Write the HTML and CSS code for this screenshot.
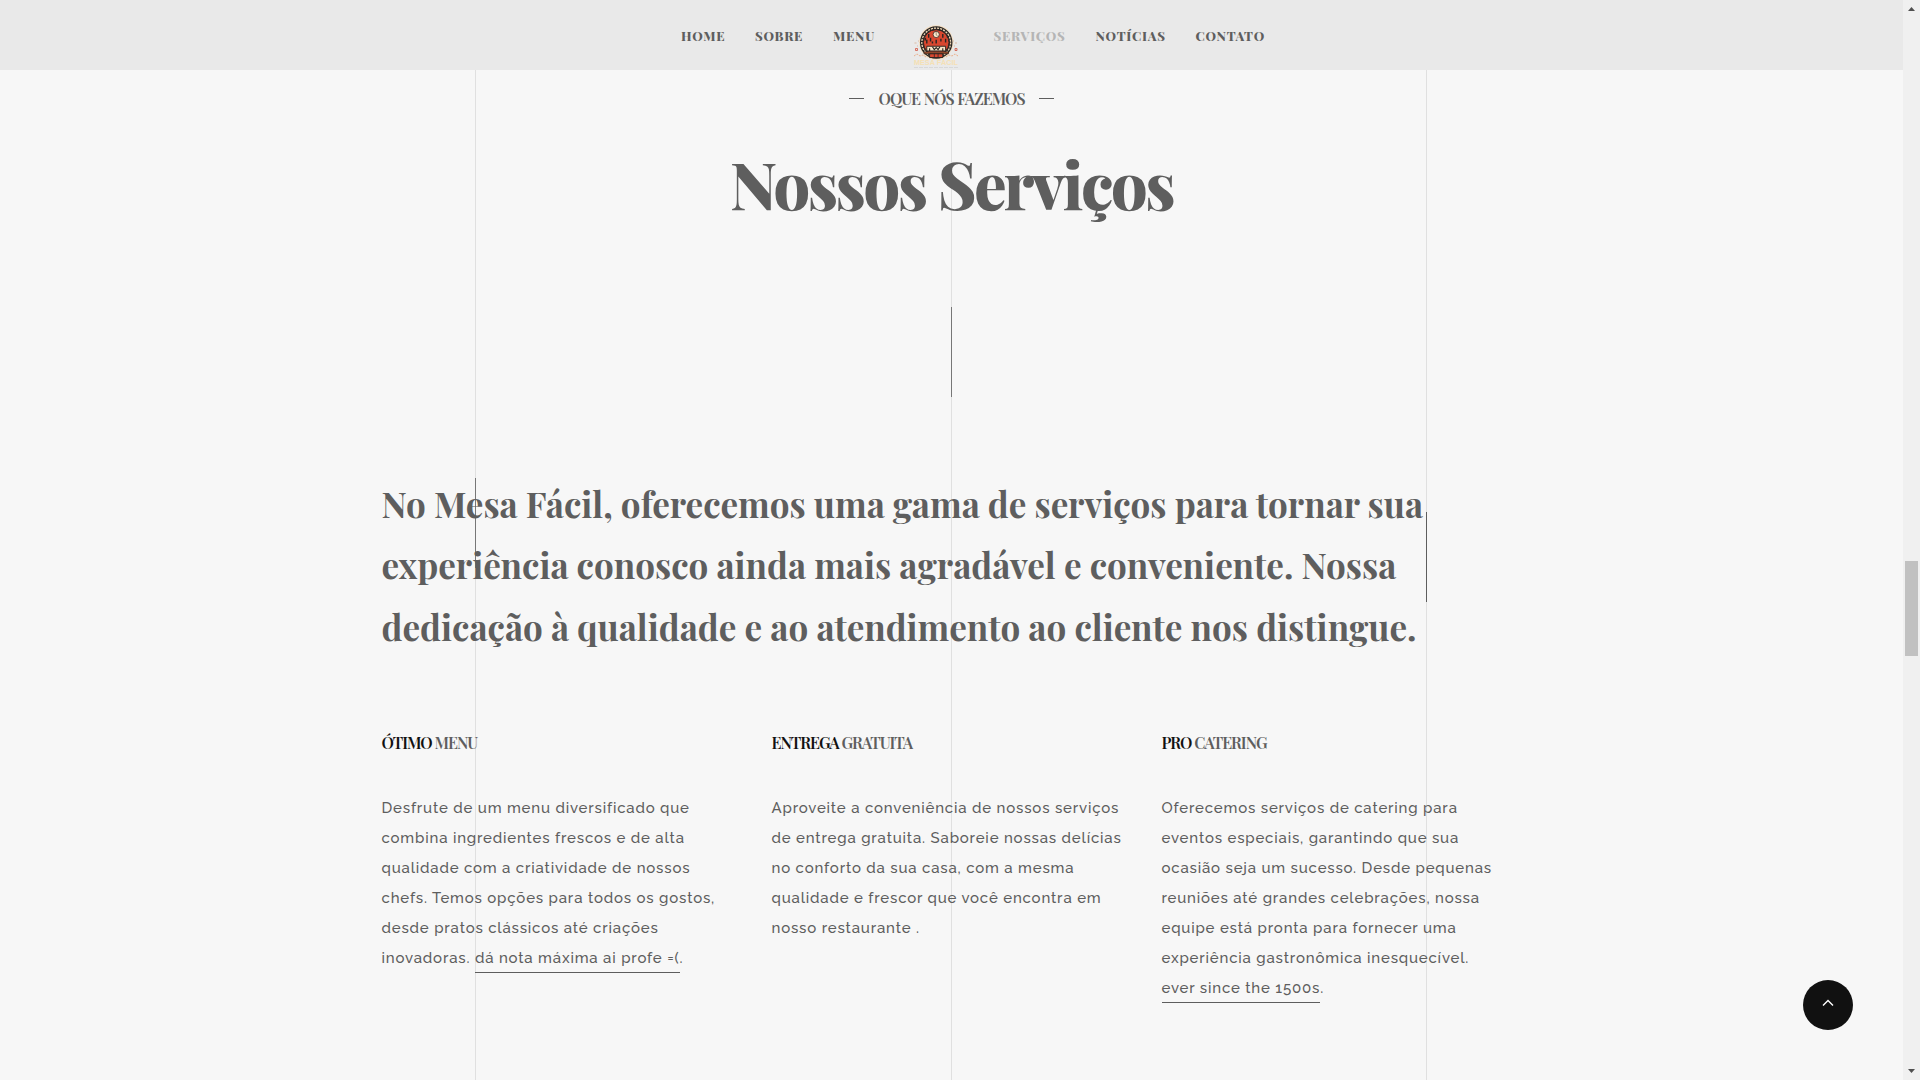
FILE: index.html
```html
<!DOCTYPE html>
<html lang="pt-BR">
<head>
<meta charset="utf-8">
<title>Mesa Fácil</title>
<link rel="stylesheet" href="styles.css">
</head>
<body>
<div class="window">
  <div class="page">
    <div class="guides"><i class="guide"></i><i class="guide"></i><i class="guide"></i></div>
    <header class="header">
      <nav class="nav">
        <a style="width:44px">HOME</a>
        <a style="width:48px">SOBRE</a>
        <a style="width:42px">MENU</a>
        <svg class="logo" viewBox="0 0 48 46" width="48" height="46">
          <g transform="translate(24.200 18.500) scale(.94) translate(-24 -19)">
            <circle cx="24" cy="19" r="18.300" fill="#f6dfc2"/>
            <circle cx="24" cy="19" r="17.300" fill="#292624"/>
            <circle cx="24" cy="19" r="15.300" fill="none" stroke="#f0d6b4" stroke-width="1.400" stroke-dasharray="2.200 1.100"/>
            <circle cx="24" cy="19" r="13.600" fill="#d9472f" stroke="#292624" stroke-width="1"/>
            <circle cx="24" cy="10.500" r="3.300" fill="#fbe9cd" stroke="#292624" stroke-width=".8"/>
            <path d="M24 8v3l1.500 1" fill="none" stroke="#7d6550" stroke-width=".7"/>
            <path d="M16 10v4M14 16v4M18 14v4M31 10v4M34 15v4M29 15v3M20 18v2M24 16v4M12.500 14v3M36 12v2" stroke="#292624" stroke-width="1.500"/>
            <path d="M14 23h20v5H14z" fill="#f8e4c6" stroke="#292624"/>
            <path d="M17 25v3M20 23.500l2 3 2-2 2 2 2-3M31 25v3" stroke="#292624" stroke-width="1.200" fill="none"/>
            <path d="M11 29h26v2H11z" fill="#b8552f" stroke="#292624" stroke-width=".8"/>
            <path d="M17 31h14v4H17z" fill="#d9472f" stroke="#292624"/>
            <path d="M22 31v4M26 31v4" stroke="#292624" stroke-width=".8"/>
          </g>
          <path d="M3.500 24.500h2v2h-2zM43 24.500h2v2h-2z" fill="#f3d9d0" stroke="#cf5746" stroke-width=".8"/>
          <path d="M2.500 19h2M43 19h2M6 17h1M41 17h1M5 22h1M42 22h1" stroke="#dbb9a1"/>
          <path d="M2 32l3-2 3 2 3-1 3 2M46 32l-3-2-3 2-3-1-3 2" stroke="#e9b18e" fill="none" stroke-dasharray="2 1"/>
          <text x="2" y="41" textLength="44" lengthAdjust="spacingAndGlyphs" class="logo-name">MESA FÁCIL</text>
          <path d="M2 43.500h44" stroke="#d8d8d8" stroke-dasharray="4 1"/>
        </svg>
        <a class="active" style="width:72px">SERVIÇOS</a>
        <a style="width:70px">NOTÍCIAS</a>
        <a style="width:69px">CONTATO</a>
      </nav>
    </header>
    <main class="services">
      <p class="eyebrow"><span>OQUE NÓS FAZEMOS</span></p>
      <h1>Nossos Serviços</h1>
      <div class="content">
        <h2>No Mesa Fácil, oferecemos uma gama de serviços para tornar sua<br>experiência conosco ainda mais agradável e conveniente. Nossa<br>dedicação à qualidade e ao atendimento ao cliente nos distingue.</h2>
        <div class="columns">
          <section>
            <h3><b>ÓTIMO</b> MENU</h3>
            <p>Desfrute de um menu diversificado que<br>combina ingredientes frescos e de alta<br>qualidade com a criatividade de nossos<br>chefs. Temos opções para todos os gostos,<br>desde pratos clássicos até criações<br>inovadoras. <a>dá nota máxima ai profe =(</a>.</p>
          </section>
          <section>
            <h3><b>ENTREGA</b> GRATUITA</h3>
            <p>Aproveite a conveniência de nossos serviços<br>de entrega gratuita. Saboreie nossas delícias<br>no conforto da sua casa, com a mesma<br>qualidade e frescor que você encontra em<br>nosso restaurante .</p>
          </section>
          <section>
            <h3><b>PRO</b> CATERING</h3>
            <p>Oferecemos serviços de catering para<br>eventos especiais, garantindo que sua<br>ocasião seja um sucesso. Desde pequenas<br>reuniões até grandes celebrações, nossa<br>equipe está pronta para fornecer uma<br>experiência gastronômica inesquecível.<br><a>ever since the 1500s</a>.</p>
          </section>
        </div>
      </div>
    </main>
    <a class="to-top"><svg width="12" height="8" viewBox="0 0 12 8"><path d="M1 6.500L6 1.500l5 5" fill="none" stroke="#fff" stroke-width="1.400"/></svg></a>
  </div>
  <aside class="scrollbar">
    <svg width="7" height="4" viewBox="0 0 7 4"><path d="M0 4L3.500 0 7 4z" fill="#505050"/></svg>
    <i class="thumb"></i>
    <svg width="7" height="4" viewBox="0 0 7 4"><path d="M0 0h7L3.500 4z" fill="#505050"/></svg>
  </aside>
</div>
</body>
</html>
```
FILE: styles.css
```css
* { box-sizing: border-box; }
body { margin: 0; overflow: hidden; background: #f7f7f7; color: #5e5e5e; font-family: "Playfair Display", "Liberation Serif", serif; }
h1, h2, h3, p { margin: 0; }
.window { display: flex; width: 1920px; height: 1080px; overflow: hidden; }
.page { position: relative; flex: 1; height: 1080px; }

.guides { position: absolute; inset: 0; z-index: -1; }
.guide { position: absolute; top: 0; bottom: 0; left: 475px; width: 1px; background: #e0e0e0; }
.guide::after { content: ""; position: absolute; left: 0; top: 478px; width: 1px; height: 90px; background: #777; }
.guide:nth-child(2) { left: 951px; }
.guide:nth-child(2)::after { top: 307px; }
.guide:nth-child(3) { left: 1426px; }
.guide:nth-child(3)::after { top: 512px; background: #5e5e5e; }

.header { height: 70px; background: #e9e9e9; }
.nav { display: flex; gap: 30px; padding-left: 681px; font-size: 13px; font-weight: 800; line-height: 20px; letter-spacing: .7px; }
.nav a { margin-top: 26px; white-space: nowrap; }
.nav .active { color: #b5b5b5; }
.logo { margin: 24px 3.500px 0 7px; overflow: visible; }
.logo-name { font: 700 8px "Liberation Sans", sans-serif; fill: #f5e0b4; letter-spacing: 0; }

.eyebrow { display: flex; justify-content: center; align-items: center; gap: 15px; height: 20px; margin-top: 18px; font-size: 16px; font-weight: 600; line-height: 20px; letter-spacing: -1.050px; word-spacing: 1px; }
.eyebrow::before, .eyebrow::after { content: ""; width: 15px; height: 1px; background: #5e5e5e; }
.eyebrow span { padding-top: 1px; }
h1 { margin-top: 33px; text-align: center; font-size: 65px; font-weight: 800; line-height: 84px; letter-spacing: -2.600px; }

.content { width: 1142px; margin: 248px 0 0 381.500px; }
h2 { font-size: 35px; line-height: 61.300px; font-weight: 700; white-space: nowrap; }
.columns { display: grid; grid-template-columns: repeat(3, 360px); column-gap: 30px; margin-top: 74px; white-space: nowrap; }
h3 { font-size: 16px; line-height: 24px; font-weight: 600; letter-spacing: -1.060px; }
h3 b { font-weight: 600; color: #111; }
.columns p { margin-top: 38px; font: 550 15px/30px Raleway, Lato, sans-serif; letter-spacing: .82px; }
.columns a { display: inline-block; height: 30px; border-bottom: 1px solid #5e5e5e; }

.to-top { position: absolute; left: 1803px; top: 980px; display: flex; justify-content: center; padding-top: 19px; width: 50px; height: 50px; border-radius: 50%; background: #111; }
.scrollbar { display: flex; flex-direction: column; align-items: center; justify-content: space-between; width: 17px; padding: 7px 0; background: #f0f0f0; }
.thumb { width: 13px; height: 95px; margin-top: 137px; background: #c1c1c1; }
```
